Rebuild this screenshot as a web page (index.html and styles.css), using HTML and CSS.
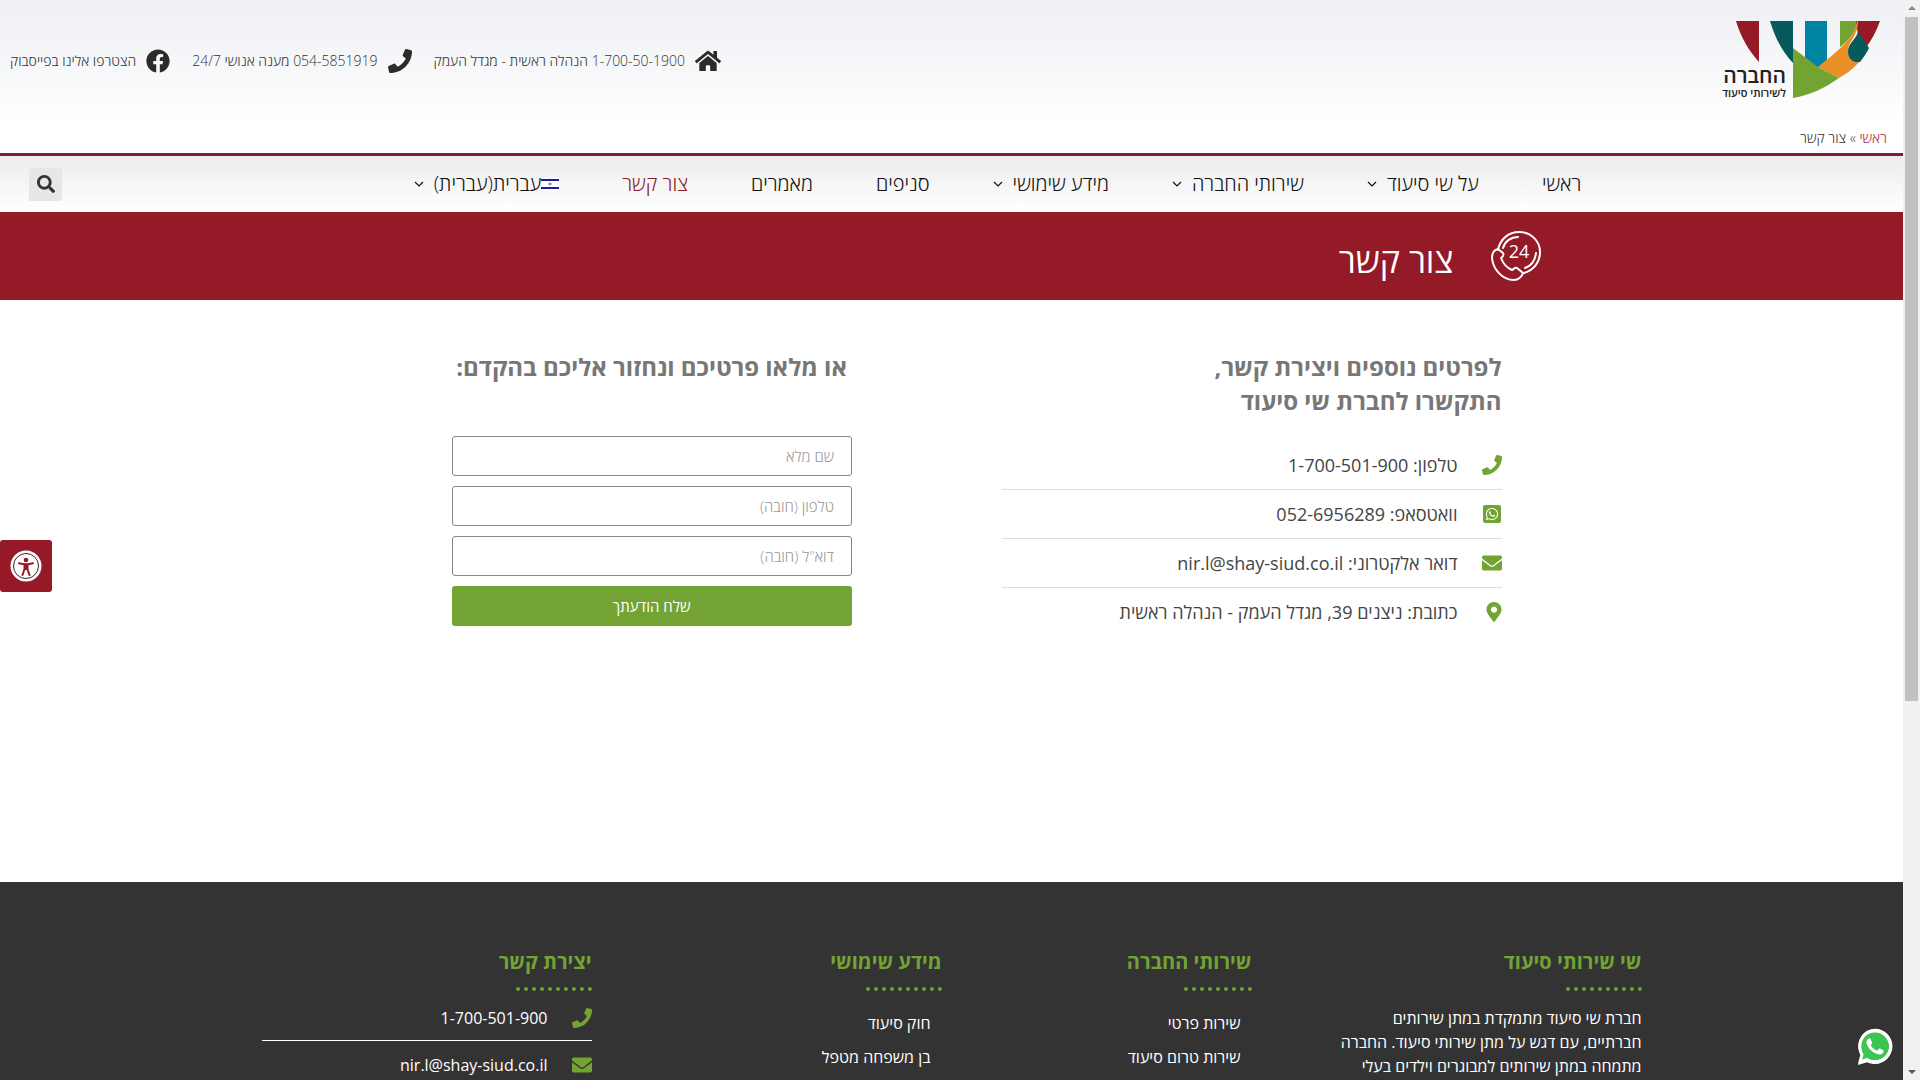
FILE: index.html
```html
<!DOCTYPE html>
<html lang="he" dir="rtl">
<head>
<meta charset="utf-8">
<meta name="viewport" content="width=device-width, initial-scale=1">
<title>צור קשר - שי שירותי סיעוד</title>
<link rel="stylesheet" href="styles.css">
</head>
<body>
<svg class="sprite" aria-hidden="true">
  <symbol id="i-phone" viewBox="0 0 512 512"><path d="M493.4 24.6l-104-24c-11.3-2.6-22.9 3.3-27.5 13.9l-48 112c-4.2 9.8-1.4 21.3 6.9 28l60.6 49.6c-36 76.7-98.9 140.5-177.2 177.2l-49.6-60.6c-6.8-8.3-18.2-11.1-28-6.9l-112 48C3.9 366.5-2 378.1.6 389.4l24 104C27.1 504.2 36.7 512 48 512c256.1 0 464-207.5 464-464 0-11.2-7.7-20.9-18.6-23.4z"/></symbol>
  <symbol id="i-mail" viewBox="0 0 512 512"><path d="M502.3 190.8c3.9-3.1 9.7-.2 9.7 4.7V400c0 26.5-21.5 48-48 48H48c-26.5 0-48-21.5-48-48V195.6c0-5 5.7-7.8 9.7-4.7 22.4 17.4 52.1 39.5 154.1 113.6 21.1 15.4 56.7 47.8 92.2 47.6 35.7.3 72-32.8 92.3-47.6 102-74.1 131.6-96.3 154-113.7zM256 320c23.2.4 56.6-29.2 73.4-41.4 132.7-96.3 142.8-104.7 173.4-128.7 5.8-4.5 9.2-11.5 9.2-18.9v-19c0-26.5-21.5-48-48-48H48c-26.5 0-48 21.5-48 48v19c0 7.4 3.4 14.3 9.2 18.9 30.6 23.9 40.7 32.4 173.4 128.7 16.8 12.2 50.2 41.8 73.4 41.4z"/></symbol>
  <symbol id="i-pin" viewBox="0 0 384 512"><path d="M172.268 501.67C26.97 291.031 0 269.413 0 192 0 85.961 85.961 0 192 0s192 85.961 192 192c0 77.413-26.97 99.031-172.268 309.67-9.535 13.774-29.93 13.773-39.464 0zM192 272c44.183 0 80-35.817 80-80s-35.817-80-80-80-80 35.817-80 80 35.817 80 80 80z"/></symbol>
  <symbol id="i-facebook" viewBox="0 0 512 512"><path d="M504 256C504 119 393 8 256 8S8 119 8 256c0 123.78 90.69 226.38 209.25 245V327.69h-63V256h63v-54.64c0-62.15 37-96.48 93.67-96.48 27.14 0 55.52 4.84 55.52 4.84v61h-31.28c-30.8 0-40.41 19.12-40.41 38.73V256h68.78l-11 71.69h-57.78V501C413.31 482.38 504 379.78 504 256z"/></symbol>
  <symbol id="i-search" viewBox="0 0 512 512"><path d="M505 442.7L405.3 343c-4.5-4.5-10.6-7-17-7H372c27.6-35.3 44-79.7 44-128C416 93.1 322.9 0 208 0S0 93.1 0 208s93.1 208 208 208c48.3 0 92.7-16.4 128-44v16.3c0 6.4 2.5 12.5 7 17l99.7 99.7c9.4 9.4 24.6 9.4 33.9 0l28.3-28.3c9.4-9.4 9.4-24.6.1-34zM208 336c-70.7 0-128-57.2-128-128 0-70.7 57.2-128 128-128 70.7 0 128 57.2 128 128 0 70.7-57.2 128-128 128z"/></symbol>
  <symbol id="i-home" viewBox="0 0 576 512"><path d="M280.37 148.26L96 300.11V464a16 16 0 0 0 16 16l112.06-.29a16 16 0 0 0 15.92-16V368a16 16 0 0 1 16-16h64a16 16 0 0 1 16 16v95.64a16 16 0 0 0 16 16.05L464 480a16 16 0 0 0 16-16V300L295.67 148.26a12.19 12.19 0 0 0-15.3 0zM571.6 251.47L488 182.56V44.05a12 12 0 0 0-12-12h-56a12 12 0 0 0-12 12v72.61L318.47 43a48 48 0 0 0-61 0L4.34 251.47a12 12 0 0 0-1.6 16.9l25.5 31A12 12 0 0 0 45.15 301l235.22-193.74a12.19 12.19 0 0 1 15.3 0L530.9 301a12 12 0 0 0 16.9-1.6l25.5-31a12 12 0 0 0-1.7-16.93z"/></symbol>
  <symbol id="i-whatsapp" viewBox="0 0 448 512"><path d="M380.9 97.1C339 55.1 283.2 32 223.9 32c-122.4 0-222 99.6-222 222 0 39.1 10.2 77.3 29.6 111L0 480l117.7-30.9c32.4 17.7 68.9 27 106.1 27h.1c122.3 0 224.1-99.6 224.1-222 0-59.3-25.2-115-67.1-157zm-157 341.6c-33.2 0-65.7-8.9-94-25.7l-6.7-4-69.8 18.3L72 359.2l-4.4-7c-18.5-29.4-28.2-63.3-28.2-98.2 0-101.7 82.8-184.5 184.6-184.5 49.3 0 95.6 19.2 130.4 54.1 34.8 34.9 56.2 81.2 56.1 130.5 0 101.8-84.9 184.6-186.6 184.6zm101.2-138.2c-5.5-2.8-32.8-16.2-37.9-18-5.1-1.9-8.8-2.8-12.5 2.8-3.7 5.6-14.3 18-17.6 21.8-3.2 3.7-6.5 4.2-12 1.4-32.6-16.3-54-29.1-75.5-66-5.7-9.8 5.7-9.1 16.3-30.3 1.8-3.7.9-6.9-.5-9.7-1.4-2.8-12.5-30.1-17.1-41.2-4.5-10.8-9.1-9.3-12.5-9.5-3.2-.2-6.9-.2-10.6-.2-3.7 0-9.7 1.4-14.8 6.9-5.1 5.6-19.4 19-19.4 46.3 0 27.3 19.9 53.7 22.6 57.4 2.8 3.7 39.1 59.7 94.8 83.8 35.2 15.2 49 16.5 66.6 13.9 10.7-1.6 32.8-13.4 37.4-26.4 4.6-13 4.6-24.1 3.2-26.4-1.3-2.5-5-3.9-10.5-6.6z"/></symbol>
  <symbol id="i-chevron" viewBox="0 0 10 10"><path d="M1 3l4 4 4-4" fill="none" stroke="currentColor" stroke-width="1.2"/></symbol>
</svg>

<header class="header">
  <div class="header-main">
    <a class="logo" href="#" aria-label="החברה לשירותי סיעוד">
      <svg width="156" height="80" viewBox="0 0 156 80" direction="rtl">
        <path d="M12 0h23v41C25 30 17 17 12 0z" fill="#951926"/>
        <path d="M46 0h23v42C58 30 51 17 46 0z" fill="#065a5c"/>
        <path d="M81 0h22v41l-10 6-12-9z" fill="#0084a3"/>
        <path d="M116 0h18c-2 9-9 20-18 26z" fill="#72a333"/>
        <path d="M132 0h24c-4 11-9 20-15 28L134 14z" fill="#951926"/>
        <path d="M133 0c-2 18-22 32-39 46l21 11c7-4 14-9 20-16-6-1-11-4-11-12 0-8 10-14 10-29z" fill="#e98f26"/>
        <path d="M134 11l11 16c-3 6-6 10-9 14-7 1-12-3-12-11 0-7 8-12 10-19z" fill="#065a5c"/>
        <path d="M69 27l25 19 21 11c-14 10-29 17-46 20z" fill="#72a333"/>
        <text class="logo-name" x="62" y="62">החברה</text>
        <text class="logo-sub" x="62" y="76">לשירותי סיעוד</text>
      </svg>
    </a>
    <ul class="top-links">
      <li><a href="#"><svg class="icon-wide"><use href="#i-home"/></svg><span>1-700-50-1900 הנהלה ראשית - מגדל העמק</span></a></li>
      <li><a href="#"><svg class="icon-top"><use href="#i-phone"/></svg><span>054-5851919 מענה אנושי 24/7</span></a></li>
      <li><a href="#"><svg class="icon-top"><use href="#i-facebook"/></svg><span>הצטרפו אלינו בפייסבוק</span></a></li>
    </ul>
  </div>
  <p class="breadcrumb"><a href="#">ראשי</a> » צור קשר</p>
</header>

<nav class="nav">
  <ul class="menu">
    <li><a href="#">ראשי</a></li>
    <li><a href="#">על שי סיעוד<svg class="chevron"><use href="#i-chevron"/></svg></a></li>
    <li><a href="#">שירותי החברה<svg class="chevron"><use href="#i-chevron"/></svg></a></li>
    <li><a href="#">מידע שימושי<svg class="chevron"><use href="#i-chevron"/></svg></a></li>
    <li><a href="#">סניפים</a></li>
    <li><a href="#">מאמרים</a></li>
    <li><a class="current" href="#">צור קשר</a></li>
    <li><a href="#"><svg class="flag" viewBox="0 0 18 12"><path d="M0 0h18v12H0z" fill="#fff"/><path d="M0 1h18v2H0zM0 9h18v2H0z" fill="#1a1aa0"/><path d="M9 4l2 3H7zM9 8L7 5h4z" fill="#8c8cd8"/></svg>עברית(עברית)<svg class="chevron"><use href="#i-chevron"/></svg></a></li>
  </ul>
  <button class="search" type="button" aria-label="חיפוש"><svg><use href="#i-search"/></svg></button>
</nav>

<section class="banner">
  <svg class="banner-icon" viewBox="0 0 50 50">
    <g class="banner-lines">
      <path d="M7 19C9 8 18 1 28 1c12 0 21 9 21 20 0 10-6 18-16 21"/>
      <path d="M12 17C14 10 20 6 27 6"/>
      <path d="M45 22c-1 8-5 13-11 15"/>
      <path d="M7 18c-4 1-6 5-6 9 1 11 10 22 22 22 4 0 8-3 9-7l-6-5c-2-1-3 1-5 2-5-2-9-7-11-12 3-2 3-3 2-5z"/>
    </g>
    <text class="banner-24" x="28" y="27" text-anchor="middle">24</text>
  </svg>
  <h1>צור קשר</h1>
</section>

<main class="content">
  <section class="details">
    <h2>לפרטים נוספים ויצירת קשר,<br>התקשרו לחברת שי סיעוד</h2>
    <ul class="contact-list">
      <li><svg class="icon"><use href="#i-phone"/></svg><span>טלפון: <bdi>1-700-501-900</bdi></span></li>
      <li><svg class="icon" viewBox="0 0 20 20"><rect x="1" y="1" width="18" height="18" rx="2"/><use class="on-green" href="#i-whatsapp" x="3" y="3" width="14" height="14"/></svg><span>וואטסאפ: <bdi>052-6956289</bdi></span></li>
      <li><svg class="icon"><use href="#i-mail"/></svg><span>דואר אלקטרוני: <bdi>nir.l@shay-siud.co.il</bdi></span></li>
      <li><svg class="icon icon-pin"><use href="#i-pin"/></svg><span>כתובת: ניצנים 39, מגדל העמק - הנהלה ראשית</span></li>
    </ul>
  </section>
  <form class="contact-form">
    <h2>או מלאו פרטיכם ונחזור אליכם בהקדם:</h2>
    <input type="text" placeholder="שם מלא" aria-label="שם מלא">
    <input type="tel" placeholder="טלפון (חובה)" aria-label="טלפון (חובה)">
    <input type="email" placeholder="דוא&quot;ל (חובה)" aria-label="דוא&quot;ל (חובה)">
    <button type="submit">שלח הודעתך</button>
  </form>
</main>

<footer class="footer">
  <div class="footer-grid">
    <section>
      <h3>שי שירותי סיעוד</h3>
      <div class="dots"></div>
      <p>חברת שי סיעוד מתמקדת במתן שירותים<br>חברתיים, עם דגש על מתן שירותי סיעוד. החברה<br>מתמחה במתן שירותים למבוגרים וילדים בעלי</p>
    </section>
    <section>
      <h3>שירותי החברה</h3>
      <div class="dots dots-short"></div>
      <ul class="footer-links"><li><a href="#">שירות פרטי</a></li><li><a href="#">שירות טרום סיעוד</a></li></ul>
    </section>
    <section>
      <h3>מידע שימושי</h3>
      <div class="dots"></div>
      <ul class="footer-links"><li><a href="#">חוק סיעוד</a></li><li><a href="#">בן משפחה מטפל</a></li></ul>
    </section>
    <section>
      <h3>יצירת קשר</h3>
      <div class="dots"></div>
      <ul class="footer-contact">
        <li><svg class="icon"><use href="#i-phone"/></svg><bdi>1-700-501-900</bdi></li>
        <li><svg class="icon"><use href="#i-mail"/></svg><bdi>nir.l@shay-siud.co.il</bdi></li>
      </ul>
    </section>
  </div>
</footer>

<button class="accessibility" type="button" aria-label="נגישות">
  <svg viewBox="0 0 32 32"><circle cx="16" cy="16" r="15.500" fill="#fff"/><circle cx="16" cy="16" r="12.500" fill="none" stroke="#3d2226" stroke-width="1"/><circle cx="16" cy="10" r="2.300" fill="#951926"/><path d="M9 13.200l5 1h4l5-1M16 14v5M14.500 15v4l-2 6M17.500 15v4l2 6" fill="none" stroke="#951926" stroke-width="2" stroke-linecap="round"/></svg>
</button>
<a class="whatsapp" href="#" aria-label="WhatsApp">
  <svg viewBox="0 0 448 512"><path d="M0 500L34 370C-30 240 20 30 224 22c130 0 230 105 230 230S350 486 224 486c-38 0-72-8-104-24z" fill="#fff"/><path d="M52 428l20-69C10 260 50 70 224 68c102 0 187 84 187 186S326 440 224 440c-35 0-66-10-100-30z" fill="#3cc553"/><use href="#i-whatsapp" fill="#fff"/></svg>
</a>
<div class="scrollbar" aria-hidden="true"><i class="arrow-up"></i><i class="thumb"></i><i class="arrow-down"></i></div>
</body>
</html>
```
FILE: styles.css
```css
* { box-sizing: border-box; }

html { scrollbar-width: none; }

body {
  margin: 0;
  padding-right: 17px;
  background: #fff;
  color: #333;
  font-family: "Open Sans", "Noto Sans", "DejaVu Sans", sans-serif;
  font-size: 16px;
  line-height: 24px;
}

h1, h2, h3, p, ul { margin: 0; padding: 0; }
ul { list-style: none; }
a { color: inherit; text-decoration: none; }
svg { display: block; flex: none; fill: currentColor; }
.sprite { position: absolute; width: 0; height: 0; }

/* Header */
.header {
  background: linear-gradient(#eeeff4, #fff 80%);
  border-bottom: 3px solid #7b1f30;
  padding: 21px 16px 3px 10px;
}
.header-main { display: flex; justify-content: space-between; height: 105px; padding-right: 7px; }
.logo svg { overflow: visible; }
.logo-name { font-size: 21px; font-weight: 600; fill: #222; }
.logo-sub { font-size: 11px; font-weight: 600; fill: #222; }
.top-links { display: flex; gap: 22px; height: 80px; align-items: center; }
.top-links a { display: flex; align-items: center; gap: 10px; font-size: 14px; font-weight: 300; }
.icon-top { width: 24px; height: 24px; color: #2b2b2b; }
.icon-wide { width: 26px; height: 24px; color: #2b2b2b; }
.breadcrumb { font-size: 14px; font-weight: 300; }
.breadcrumb a { color: #b01c3c; }

/* Navigation */
.nav {
  display: flex;
  align-items: center;
  height: 56px;
  padding-left: 29px;
  gap: 30px;
  background: linear-gradient(#ececec, #fff);
}
.menu { flex: 1; display: flex; justify-content: center; gap: 63px; }
.menu a { display: flex; align-items: center; font-size: 20px; font-weight: 300; color: #111; white-space: nowrap; }
.menu .current { color: #8c1c28; }
.chevron { width: 10px; height: 10px; margin-right: 10px; }
.flag { width: 18px; height: 12px; }
.search {
  display: flex;
  align-items: center;
  justify-content: center;
  width: 33px;
  height: 33px;
  padding: 0;
  border: 0;
  background: #e6e7e8;
  color: #333;
}
.search svg { width: 18px; height: 18px; }

/* Page title */
.banner {
  display: flex;
  align-items: center;
  gap: 38px;
  height: 88px;
  padding-right: 19%;
  background: #931a26;
  color: #fff;
}
.banner-icon { width: 50px; height: 50px; }
.banner-lines { fill: none; stroke: #fff; stroke-width: 2; stroke-linejoin: round; stroke-linecap: round; }
.banner-24 { font-size: 18px; fill: #fff; }
.banner h1 { padding-top: 8px; font-size: 34px; font-weight: 400; line-height: 48px; }

/* Contact details and form */
.content {
  display: grid;
  grid-template-columns: 499fr 400fr;
  gap: 150px;
  max-width: 1140px;
  min-height: 582px;
  margin: 0 auto;
  padding: 50px 20px 0 70px;
}
.content h2 { font-size: 24px; font-weight: 700; line-height: 34px; color: #777; }
.contact-list { margin-top: 22px; }
.contact-list li {
  display: flex;
  align-items: center;
  gap: 24px;
  height: 49px;
  font-size: 18px;
  color: #444;
}
.contact-list li + li { border-top: 1px solid #ddd; }
.icon { width: 20px; height: 20px; color: #72a333; }
.icon-pin { width: 16px; margin-left: 4px; }
.on-green { color: #fff; fill: #fff; }
.contact-form { display: flex; flex-direction: column; gap: 10px; }
.contact-form h2 { height: 76px; padding-right: 5px; white-space: nowrap; }
.contact-form input {
  height: 40px;
  padding: 0 17px;
  border: 1px solid #818a91;
  border-radius: 3px;
  font: inherit;
  font-size: 15px;
  text-align: right;
  direction: rtl;
}
.contact-form input::placeholder { color: #999; font-weight: 300; opacity: 1; }
.contact-form button {
  height: 40px;
  border: 0;
  border-radius: 3px;
  background: #72a333;
  color: #fff;
  font: inherit;
  font-size: 15px;
}

/* Footer */
.footer { background: #333; color: #fff; padding: 68px 0 60px; }
.footer-grid {
  display: grid;
  grid-template-columns: 390fr 310fr 350fr 330fr;
  max-width: 1380px;
  margin: 0 auto;
}
.footer h3 { font-size: 20px; font-weight: 700; line-height: 24px; color: #72a333; }
.dots { width: 76px; margin: 13px 0 15px; border-top: 4px dotted #72a333; }
.dots-short { width: 68px; }
.footer-links { padding: 5px 11px 0 0; }
.footer-links li { height: 34px; }
.footer-contact li { display: flex; align-items: center; gap: 24px; padding-bottom: 10px; }
.footer-contact li + li { padding-top: 12px; border-top: 1px solid #fff; }

/* Floating controls */
.accessibility {
  position: fixed;
  left: 0;
  top: 540px;
  display: flex;
  align-items: center;
  justify-content: center;
  width: 52px;
  height: 52px;
  padding: 0;
  border: 0;
  border-radius: 3px;
  background: #951926;
}
.accessibility svg { width: 32px; height: 32px; }
.whatsapp { position: fixed; right: 28px; bottom: 14px; }
.whatsapp svg { width: 34px; height: 39px; overflow: visible; }
.scrollbar {
  position: fixed;
  top: 0;
  right: 0;
  bottom: 0;
  display: flex;
  flex-direction: column;
  align-items: center;
  width: 17px;
  padding: 6px 0;
  background: #f1f1f1;
}
.thumb { width: 13px; height: 64%; margin: 7px 0 auto; background: #c1c1c1; }
.arrow-up, .arrow-down { border: 4px solid transparent; }
.arrow-up { border-top: 0; border-bottom-color: #888; }
.arrow-down { border-bottom: 0; border-top-color: #555; }
```
